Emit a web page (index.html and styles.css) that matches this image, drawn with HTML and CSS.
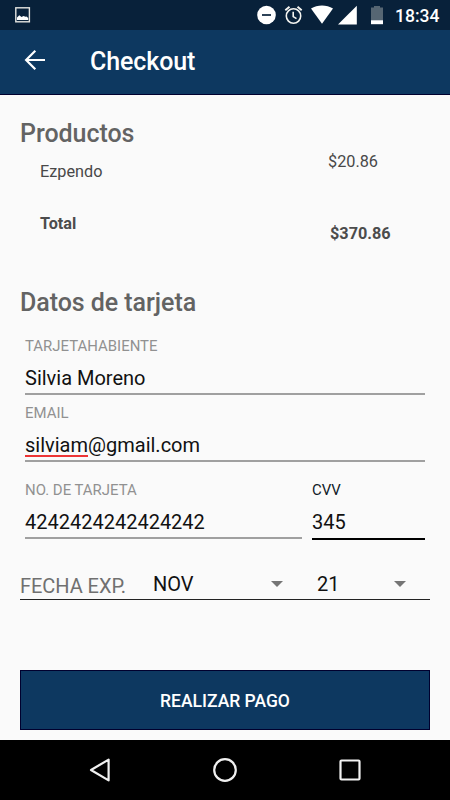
FILE: index.html
```html
<!DOCTYPE html>
<html lang="es">
<head>
<meta charset="utf-8">
<title>Checkout</title>
<link rel="stylesheet" href="styles.css">
</head>
<body>
<div class="status">
  <svg class="status-picture" width="16" height="16" viewBox="0 0 16 16"><rect x=".8" y=".8" width="13.6" height="14" fill="none" stroke="#e4e4e0" stroke-width="1.4"/><path d="M2 13V10.5L4.300 8.300 6.500 10 8.500 9 10.500 9.800 11.500 9.500 13.200 11V13Z" fill="#fff"/></svg>
  <svg width="190" height="30" viewBox="0 0 190 30" class="status-icons">
    <circle cx="26.500" cy="15" r="9.300" fill="#fff"/><path d="M22 15h9" stroke="#08213a" stroke-width="1.700"/>
    <g fill="none" stroke="#f4f4f0" stroke-width="1.600"><circle cx="53.500" cy="16" r="7.200"/><path d="M53.200 11.800v4.800l3.300 2"/><path d="M45.300 10.300l4.200-3.600M61.700 10.300l-4.200-3.600" stroke-width="1.900"/></g>
    <path d="M71 8.600C77.500 4.600 86.500 4.600 93 8.600L82 23.800Z" fill="#fff"/>
    <path d="M98 24.500L116.800 5.800V24.500Z" fill="#fff"/>
    <path d="M131 7.500h3V6h6v1.500h3V20h-12Z" fill="#566673"/><path d="M131 20.200h12V24.200h-12Z" fill="#fff"/>
  </svg>
  <span class="clock">18:34</span>
</div>
<header class="appbar">
  <svg width="22" height="22" viewBox="0 0 22 22"><path d="M21 11H2.500M11.300 1.800L2.100 11l9.200 9.200" fill="none" stroke="#fff" stroke-width="2.200"/></svg>
  <h1>Checkout</h1>
</header>
<main>
  <h2>Productos</h2>
  <div class="row product"><span>Ezpendo</span><span class="price">$20.86</span></div>
  <div class="row total"><span>Total</span><span class="price">$370.86</span></div>
  <h2 class="card-heading">Datos de tarjeta</h2>
  <form>
    <div class="field"><label>TARJETAHABIENTE</label><div class="value">Silvia Moreno</div></div>
    <div class="field"><label>EMAIL</label><div class="value"><span class="misspelled">silviam</span>@gmail.com</div></div>
    <div class="pair">
      <div class="field number"><label>NO. DE TARJETA</label><div class="value">4242424242424242</div></div>
      <div class="field active"><label>CVV</label><div class="value">345</div></div>
    </div>
    <div class="expiry">
      <span class="expiry-label">FECHA EXP.</span>
      <span class="select month">NOV<i class="caret"></i></span>
      <span class="select year">21<i class="caret"></i></span>
    </div>
    <button type="button">REALIZAR PAGO</button>
  </form>
</main>
<nav>
  <svg width="24" height="26" viewBox="0 0 24 26"><path d="M20.600 2.600V23.400L3 13Z" fill="none" stroke="#f0f0f0" stroke-width="2.200" stroke-linejoin="round"/></svg>
  <svg width="26" height="26" viewBox="0 0 26 26"><circle cx="13" cy="13" r="10.800" fill="none" stroke="#f0f0f0" stroke-width="2.200"/></svg>
  <svg width="24" height="24" viewBox="0 0 24 24"><rect x="2.500" y="2.500" width="19" height="19" rx="1" fill="none" stroke="#f0f0f0" stroke-width="2.200"/></svg>
</nav>
</body>
</html>
```
FILE: styles.css
```css
* { box-sizing: border-box; }
body {
  margin: 0;
  width: 450px;
  height: 800px;
  display: flex;
  flex-direction: column;
  background: #fafafa;
  font-family: Roboto, sans-serif;
  overflow: hidden;
}
svg { display: block; flex: none; }
.status {
  height: 30px;
  display: flex;
  align-items: center;
  padding-left: 15px;
  background: #08213a;
}
.status-icons { margin-left: 209px; margin-right: -35px; }
.clock { padding-top: 2px; color: #fff; font-size: 17.5px; font-weight: 500; line-height: 30px; }
.appbar {
  height: 65px;
  display: flex;
  align-items: center;
  padding: 0 0 4px 24px;
  gap: 44px;
  background: #0d3860;
  border-bottom: 1px solid #00002e;
}
h1 { margin: 0; padding-top: 4px; color: #fff; font-size: 25px; letter-spacing: -0.1px; font-weight: 500; line-height: 30px; }
main { height: 645px; padding: 24px 20px 10px; }
h2 { margin: 0; font-size: 25px; letter-spacing: -0.05px; font-weight: 500; line-height: 30px; color: #636363; }
.row {
  display: grid;
  grid-template-columns: 288px 1fr;
  padding-left: 20px;
  font-size: 16.25px;
  line-height: 20px;
  color: #484848;
}
.product { height: 52px; padding-top: 3px; }
.total { height: 76px; padding-top: 13px; grid-template-columns: 290px 1fr; font-weight: 700; color: #4c4c4c; }
.product > :first-child { padding-top: 10px; }
.total .price { padding-top: 10px; }
.card-heading { margin-top: -18px; padding-top: 29px; line-height: 30px; }
form { padding-top: 17px; }
.field { height: 67px; margin: 0 5px; }
.field label { display: block; height: 20px; font-size: 14.95px; line-height: 22px; color: #919191; }
.value { height: 40px; padding-top: 8px; line-height: 30px; font-size: 20px; color: #111; border-bottom: 2px solid #a0a0a0; }
.misspelled { display: inline-block; line-height: 19px; border-bottom: 2px solid #ed3535; }
.pair { display: flex; gap: 10px; padding: 10px 5px 0; }
.pair .field { margin: 0; flex: 1; }
.pair .number { flex: none; width: 277px; }
.active label { color: #101a28; }
.active .value { height: 41px; border-color: #000; }
.expiry { display: flex; align-items: flex-end; height: 30px; margin-top: 24px; border-bottom: 1px solid #222; font-size: 20px; line-height: 28px; }
.expiry-label { width: 133px; line-height: 26px; letter-spacing: -0.05px; color: #707070; }
.select { display: flex; justify-content: space-between; align-items: center; margin-bottom: 1px; color: #111; }
.month { width: 130px; }
.year { width: 89px; margin-left: 34px; }
.caret { border: 6px solid transparent; border-top-color: #757575; border-bottom: 0; }
button {
  display: block;
  width: 410px;
  height: 60px;
  margin: 70px 0 0;
  padding: 2px 0 0;
  border: 1px solid #00002e;
  background: #0d3860;
  color: #fff;
  font: 500 17.5px/30px Roboto, sans-serif;
}
nav { height: 60px; display: flex; align-items: center; padding-left: 88px; gap: 100px; background: #000; }
```
